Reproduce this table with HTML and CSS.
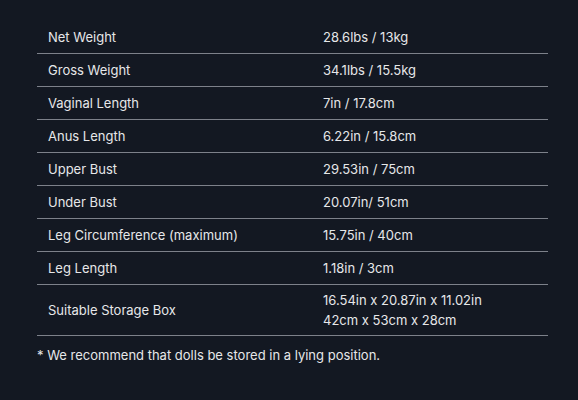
FILE: index.html
```html
<!DOCTYPE html>
<html>
<head>
<meta charset="utf-8">
<link rel="stylesheet" href="styles.css">
</head>
<body>
<div class="wrap">
  <div class="specs">
    <div class="row"><div class="k">Net Weight</div><div class="v">28.6lbs / 13kg</div></div>
    <div class="row"><div class="k">Gross Weight</div><div class="v">34.1lbs / 15.5kg</div></div>
    <div class="row"><div class="k">Vaginal Length</div><div class="v">7in / 17.8cm</div></div>
    <div class="row"><div class="k">Anus Length</div><div class="v">6.22in / 15.8cm</div></div>
    <div class="row"><div class="k">Upper Bust</div><div class="v">29.53in / 75cm</div></div>
    <div class="row"><div class="k">Under Bust</div><div class="v">20.07in/ 51cm</div></div>
    <div class="row"><div class="k">Leg Circumference (maximum)</div><div class="v">15.75in / 40cm</div></div>
    <div class="row"><div class="k">Leg Length</div><div class="v">1.18in / 3cm</div></div>
    <div class="row tall"><div class="k">Suitable Storage Box</div><div class="v">16.54in x 20.87in x 11.02in<br>42cm x 53cm x 28cm</div></div>
  </div>
  <p class="note">* We recommend that dolls be stored in a lying position.</p>
</div>
</body>
</html>
```
FILE: styles.css
```css
html, body {
  margin: 0;
  padding: 0;
  background: #131822;
}
body {
  width: 578px;
  height: 400px;
  overflow: hidden;
  font-family: Inter, "Noto Sans", sans-serif;
  font-size: 13px;
  color: #e6e7e9;
}
.wrap {
  padding: 21px 30px 0 37px;
}
.specs {
  width: 511px;
}
.row {
  display: grid;
  grid-template-columns: 275px 1fr;
  align-items: center;
  border-bottom: 1px solid #7d818a;
}
.k, .v {
  padding: 6px 11px;
  line-height: 20px;
}
.tall .v {
  padding: 5px 11px;
}
.note {
  margin: 0;
  padding-top: 9px;
  line-height: 20px;
}
```
